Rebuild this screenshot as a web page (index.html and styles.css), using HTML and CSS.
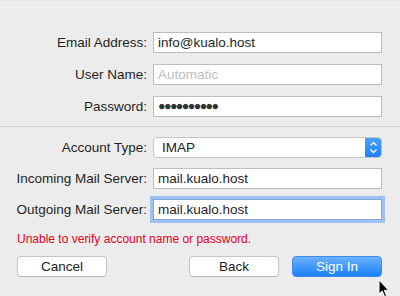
FILE: index.html
```html
<!DOCTYPE html>
<html>
<head>
<meta charset="utf-8">
<link rel="stylesheet" href="styles.css">
</head>
<body>
<div class="sheet">
  <div class="group top">
    <div class="row"><label class="lbl">Email Address:</label><div class="field">info@kualo.host</div></div>
    <div class="row"><label class="lbl">User Name:</label><div class="field placeholder">Automatic</div></div>
    <div class="row"><label class="lbl">Password:</label><div class="field dots">●●●●●●●●●●</div></div>
  </div>
  <div class="sep"></div>
  <div class="group bottom">
    <div class="row"><label class="lbl">Account Type:</label>
      <div class="popup"><span class="popup-text">IMAP</span>
        <span class="stepper"><svg width="17" height="21" viewBox="0 0 17 21"><path d="M5.5 8.5 L8.5 5.5 L11.5 8.5 M5.5 12.5 L8.5 15.5 L11.5 12.5" fill="none" stroke="#fff" stroke-width="1.4"/></svg></span>
      </div>
    </div>
    <div class="row"><label class="lbl">Incoming Mail Server:</label><div class="field">mail.kualo.host</div></div>
    <div class="row"><label class="lbl">Outgoing Mail Server:</label><div class="field focus">mail.kualo.host</div></div>
  </div>
  <div class="error">Unable to verify account name or password.</div>
  <div class="buttons">
    <button class="btn">Cancel</button>
    <div class="right">
      <button class="btn">Back</button>
      <button class="btn primary">Sign In</button>
    </div>
  </div>
  <svg class="cursor" width="12" height="19" viewBox="0 0 12 19"><path d="M1 1 L1 15 L4.2 12 L6.6 17.6 L8.6 16.7 L6.3 11.3 L10.6 11.3 Z" fill="#000" stroke="#fff" stroke-width="1"/></svg>
</div>
</body>
</html>
```

FILE: styles.css
```css
html, body { margin: 0; padding: 0; }
body {
  background: #ececec;
  font-family: "Liberation Sans", Arial, sans-serif;
  font-size: 13.5px;
  color: #222;
  width: 400px;
  height: 296px;
  overflow: hidden;
}
.sheet {
  position: relative;
  height: 296px;
  box-sizing: border-box;
  border-top: 1px solid #e4e4e4;
}
.group { display: flex; flex-direction: column; }
.top { padding-top: 31px; gap: 11px; }
.bottom { padding-top: 10px; gap: 10px; }
.row { display: flex; align-items: center; height: 21px; }
.lbl {
  text-align: right;
  padding-right: 6px;
  box-sizing: border-box;
  width: 153px;
  color: #1f1f1f;
}
.field {
  width: 229px;
  height: 21px;
  box-sizing: border-box;
  background: #fff;
  border: 1px solid #bdbdbd;
  padding: 0 4px;
  line-height: 19px;
  font-size: 13.5px;
  color: #1f1f1f;
}
.placeholder { color: #bdbdbd; }
.dots { font-size: 12.5px; letter-spacing: -1.6px; color: #333; line-height: 19px; }
.focus {
  border: 1px solid #7aa7e6;
  box-shadow: 0 0 0 3px #9fc2f2;
  height: 21px;
}
.sep { height: 1px; background: #d6d6d6; margin-top: 9px; }
.popup {
  width: 229px;
  height: 21px;
  box-sizing: border-box;
  background: #fff;
  border: 1px solid #c6c6c6;
  border-radius: 4px;
  display: flex;
  align-items: center;
  position: relative;
  overflow: hidden;
}
.popup-text { flex: 1; padding-left: 8px; }
.stepper {
  width: 17px;
  height: 21px;
  margin-right: -1px;
  background: linear-gradient(#4ea2fd, #1b7efb);
  display: flex;
}
.error {
  color: #e8001c;
  font-size: 12px;
  padding-left: 17px;
  margin-top: 12px;
  height: 14px;
  line-height: 14px;
}
.buttons {
  display: flex;
  justify-content: space-between;
  padding: 0 18px 0 17px;
  margin-top: 10px;
}
.right { display: flex; gap: 13px; }
.btn {
  width: 90px;
  height: 21px;
  box-sizing: border-box;
  border: 1px solid #c5c5c5;
  border-bottom-color: #b5b5b5;
  border-radius: 4px;
  background: #fff;
  font-family: "Liberation Sans", Arial, sans-serif;
  font-size: 13.5px;
  color: #222;
  padding: 0;
}
.primary {
  background: linear-gradient(#6cb1fb, #1a7ffb);
  border-color: #3b8cf0;
  color: #fff;
}
.cursor { position: absolute; left: 378px; top: 278px; }
```
